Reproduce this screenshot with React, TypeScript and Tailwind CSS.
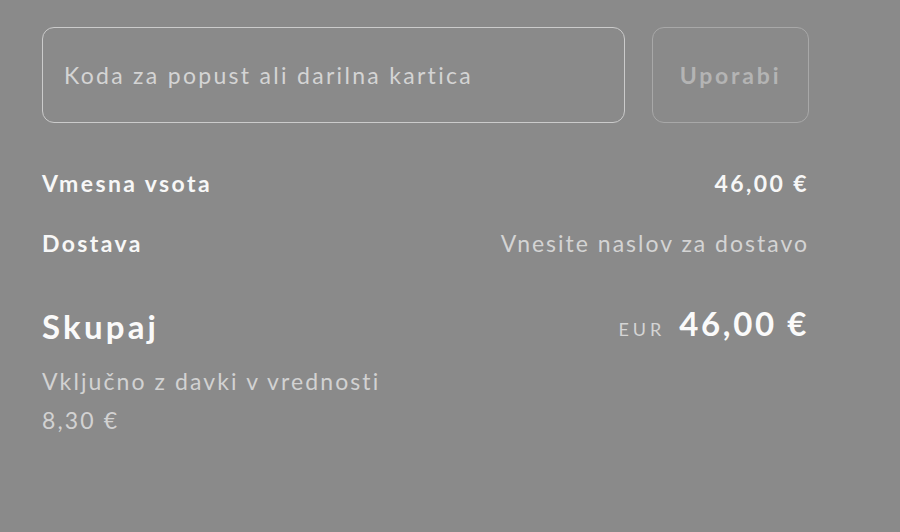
export default function App() {
  return (
    <div className="min-h-[532px] w-[900px] bg-[#8a8a8a] font-['Lato','Open_Sans',sans-serif]">
      <div className="w-[809px] pl-[42px] pt-[27px]">
        <div className="flex gap-[27px]">
          <div className="flex h-[96px] flex-1 items-center rounded-[12px] border border-[#cbcbcb] px-[21px]">
            <span className="text-[23px] tracking-[2.3px] text-[#d4d4d4]">Koda za popust ali darilna kartica</span>
          </div>
          <button className="flex h-[96px] w-[157px] items-center justify-center rounded-[12px] border border-[#a8a8a8] text-[23px] font-bold tracking-[2.8px] text-[#b4b4b4]">
            Uporabi
          </button>
        </div>

        <div className="mt-[45px] flex items-center justify-between text-[23px] leading-[30px] font-bold tracking-[2.4px] text-[#f7f7f7]">
          <span>Vmesna vsota</span>
          <span>46,00 €</span>
        </div>
        <div className="mt-[30px] flex items-center justify-between text-[23px] leading-[30px]">
          <span className="font-bold tracking-[2.4px] text-[#f7f7f7]">Dostava</span>
          <span className="tracking-[2px] text-[#d4d4d4]">Vnesite naslov za dostavo</span>
        </div>

        <div className="mt-[45px] flex items-center justify-between leading-[40px]">
          <span className="text-[33px] font-bold tracking-[3.2px] text-[#fafafa]">Skupaj</span>
          <span className="flex items-baseline gap-[14px]">
            <span className="text-[18px] tracking-[4px] text-[#d4d4d4]">EUR</span>
            <span className="text-[33px] font-bold tracking-[2.6px] text-[#fafafa]">46,00 €</span>
          </span>
        </div>
        <div className="mt-[13px] text-[23px] leading-[39px] tracking-[2.1px] text-[#d2d2d2]">
          <div>Vključno z davki v vrednosti</div>
          <div>8,30 €</div>
        </div>
      </div>
    </div>
  );
}
